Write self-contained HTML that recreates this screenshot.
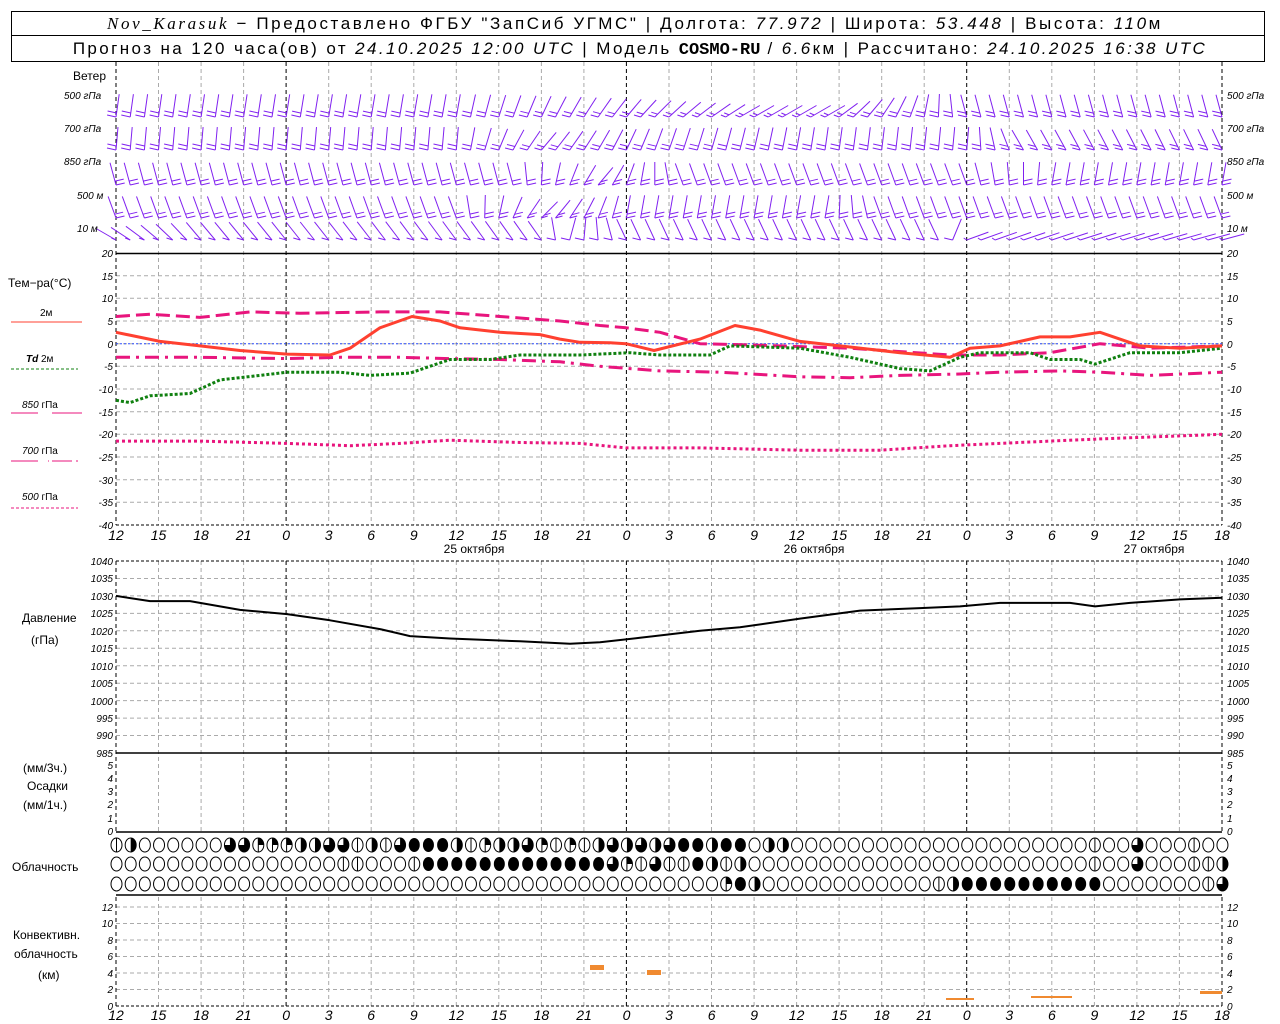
<!DOCTYPE html>
<html><head><meta charset="utf-8"><style>
html,body{margin:0;padding:0;background:#fff;}
svg{display:block;font-family:"Liberation Sans",sans-serif;}
.t{font-size:10px;font-style:italic;fill:#000;}
.l{font-size:12px;fill:#000;}
.h{font-size:17px;fill:#000;letter-spacing:2.6px;}
</style></head><body>
<svg id="s" width="1280" height="1024" viewBox="0 0 1280 1024" xmlns="http://www.w3.org/2000/svg">
<rect x="11.5" y="11.5" width="1253" height="50" fill="none" stroke="#000"/>
<line x1="11" y1="35.5" x2="1265" y2="35.5" stroke="#000"/>
<text class="h" x="635" y="29" text-anchor="middle"><tspan font-family="Liberation Serif" font-style="italic">Nov_Karasuk</tspan> − Предоставлено ФГБУ "ЗапСиб УГМС" | Долгота: <tspan font-style="italic">77.972</tspan> | Широта: <tspan font-style="italic">53.448</tspan> | Высота: <tspan font-style="italic">110</tspan>м</text>
<text class="h" x="640" y="54" text-anchor="middle" font-size="16" style="letter-spacing:2.4px">Прогноз на 120 часа(ов) от <tspan font-style="italic">24.10.2025 12:00 UTC</tspan>  | Модель <tspan font-family="Liberation Mono" font-weight="bold" style="letter-spacing:0">COSMO-RU</tspan> / <tspan font-style="italic">6.6</tspan>км | Рассчитано: <tspan font-style="italic">24.10.2025 16:38 UTC</tspan></text>
<g id="g"></g>
<g class="l">
<text x="73" y="80">Ветер</text>
<text x="8" y="287">Тем−ра(°C)</text>
<text x="40" y="316" font-size="10">2м</text>
<text x="26" y="362" font-size="10"><tspan font-style="italic" font-weight="bold">Td</tspan>  2м</text>
<text x="22" y="408" font-size="10"><tspan font-style="italic">850</tspan> гПа</text>
<text x="22" y="454" font-size="10"><tspan font-style="italic">700</tspan> гПа</text>
<text x="22" y="500" font-size="10"><tspan font-style="italic">500</tspan> гПа</text>
<text x="22" y="622">Давление</text>
<text x="31" y="644">(гПа)</text>
<text x="23" y="772">(мм/3ч.)</text>
<text x="27" y="790">Осадки</text>
<text x="23" y="809">(мм/1ч.)</text>
<text x="12" y="871">Облачность</text>
<text x="13" y="939">Конвективн.</text>
<text x="14" y="958">облачность</text>
<text x="38" y="979">(км)</text>
<text x="474" y="553" text-anchor="middle">25 октября</text>
<text x="814" y="553" text-anchor="middle">26 октября</text>
<text x="1154" y="553" text-anchor="middle">27 октября</text>
</g>
<g class="t">
<text x="64" y="99"><tspan>500</tspan> гПа</text><text x="64" y="132">700 гПа</text><text x="64" y="165">850 гПа</text><text x="77" y="199">500 м</text><text x="77" y="232">10  м</text>
<text x="1227" y="99">500 гПа</text><text x="1227" y="132">700 гПа</text><text x="1227" y="165">850 гПа</text><text x="1227" y="199">500 м</text><text x="1227" y="232">10  м</text>
</g>
<g class="t" text-anchor="end">
<text x="113" y="257">20</text><text x="113" y="280">15</text><text x="113" y="302">10</text><text x="113" y="325">5</text><text x="113" y="348">0</text><text x="113" y="370">-5</text><text x="113" y="393">-10</text><text x="113" y="416">-15</text><text x="113" y="438">-20</text><text x="113" y="461">-25</text><text x="113" y="484">-30</text><text x="113" y="506">-35</text><text x="113" y="529">-40</text>
<text x="113" y="565">1040</text><text x="113" y="582">1035</text><text x="113" y="600">1030</text><text x="113" y="617">1025</text><text x="113" y="635">1020</text><text x="113" y="652">1015</text><text x="113" y="670">1010</text><text x="113" y="687">1005</text><text x="113" y="705">1000</text><text x="113" y="722">995</text><text x="113" y="739">990</text><text x="113" y="757">985</text>
<text x="113" y="835">0</text><text x="113" y="822">1</text><text x="113" y="808">2</text><text x="113" y="795">3</text><text x="113" y="782">4</text><text x="113" y="769">5</text>
<text x="113" y="1010">0</text><text x="113" y="993">2</text><text x="113" y="977">4</text><text x="113" y="960">6</text><text x="113" y="944">8</text><text x="113" y="927">10</text><text x="113" y="911">12</text>
</g>
<g class="t">
<text x="1227" y="257">20</text><text x="1227" y="280">15</text><text x="1227" y="302">10</text><text x="1227" y="325">5</text><text x="1227" y="348">0</text><text x="1227" y="370">-5</text><text x="1227" y="393">-10</text><text x="1227" y="416">-15</text><text x="1227" y="438">-20</text><text x="1227" y="461">-25</text><text x="1227" y="484">-30</text><text x="1227" y="506">-35</text><text x="1227" y="529">-40</text>
<text x="1227" y="565">1040</text><text x="1227" y="582">1035</text><text x="1227" y="600">1030</text><text x="1227" y="617">1025</text><text x="1227" y="635">1020</text><text x="1227" y="652">1015</text><text x="1227" y="670">1010</text><text x="1227" y="687">1005</text><text x="1227" y="705">1000</text><text x="1227" y="722">995</text><text x="1227" y="739">990</text><text x="1227" y="757">985</text>
<text x="1227" y="835">0</text><text x="1227" y="822">1</text><text x="1227" y="808">2</text><text x="1227" y="795">3</text><text x="1227" y="782">4</text><text x="1227" y="769">5</text>
<text x="1227" y="1010">0</text><text x="1227" y="993">2</text><text x="1227" y="977">4</text><text x="1227" y="960">6</text><text x="1227" y="944">8</text><text x="1227" y="927">10</text><text x="1227" y="911">12</text>
</g>
<g font-size="14" font-style="italic" text-anchor="middle">
<text x="116" y="540">12</text><text x="158.5" y="540">15</text><text x="201" y="540">18</text><text x="243.6" y="540">21</text><text x="286.2" y="540">0</text><text x="328.7" y="540">3</text><text x="371.2" y="540">6</text><text x="413.8" y="540">9</text><text x="456.3" y="540">12</text><text x="498.9" y="540">15</text><text x="541.4" y="540">18</text><text x="584" y="540">21</text><text x="626.5" y="540">0</text><text x="669" y="540">3</text><text x="711.6" y="540">6</text><text x="754.1" y="540">9</text><text x="796.6" y="540">12</text><text x="839.2" y="540">15</text><text x="881.7" y="540">18</text><text x="924.3" y="540">21</text><text x="966.8" y="540">0</text><text x="1009.3" y="540">3</text><text x="1051.9" y="540">6</text><text x="1094.4" y="540">9</text><text x="1137" y="540">12</text><text x="1179.5" y="540">15</text><text x="1222" y="540">18</text>
<text x="116" y="1020">12</text><text x="158.5" y="1020">15</text><text x="201" y="1020">18</text><text x="243.6" y="1020">21</text><text x="286.2" y="1020">0</text><text x="328.7" y="1020">3</text><text x="371.2" y="1020">6</text><text x="413.8" y="1020">9</text><text x="456.3" y="1020">12</text><text x="498.9" y="1020">15</text><text x="541.4" y="1020">18</text><text x="584" y="1020">21</text><text x="626.5" y="1020">0</text><text x="669" y="1020">3</text><text x="711.6" y="1020">6</text><text x="754.1" y="1020">9</text><text x="796.6" y="1020">12</text><text x="839.2" y="1020">15</text><text x="881.7" y="1020">18</text><text x="924.3" y="1020">21</text><text x="966.8" y="1020">0</text><text x="1009.3" y="1020">3</text><text x="1051.9" y="1020">6</text><text x="1094.4" y="1020">9</text><text x="1137" y="1020">12</text><text x="1179.5" y="1020">15</text><text x="1222" y="1020">18</text>
</g>
</svg>
<script>
(function(){
var g=document.getElementById("g"),out=[];
function X(t){return 116+t*14.179;}
function L(x1,y1,x2,y2,c,w,d){out.push('<line x1="'+x1.toFixed(1)+'" y1="'+y1.toFixed(1)+'" x2="'+x2.toFixed(1)+'" y2="'+y2.toFixed(1)+'" stroke="'+c+'" stroke-width="'+(w||1)+'"'+(d?' stroke-dasharray="'+d+'"':'')+'/>');}
function TY(T){return 253+(20-T)*4.5333;}
function PY(P){return 561+(1040-P)*3.4909;}
function CY(k){return 1006-k*8.25;}
for(var T=15;T>-40;T-=5)L(116,TY(T),1222,TY(T),"#aaa",1,"4,3");
for(var P=1035;P>985;P-=5)L(116,PY(P),1222,PY(P),"#aaa",1,"4,3");
for(var k=2;k<=12;k+=2)L(116,CY(k),1222,CY(k),"#aaa",1,"4,3");
for(var k=0;k<=26;k++){var x=X(3*k),day=(k%8==4),c=day?"#000":"#aaa";
 if(k==0||k==26)c="#000";
 L(x,62,x,525,c,1,"4,3");L(x,561,x,832,c,1,"4,3");L(x,897,x,1006,c,1,"4,3");}
L(116,253.5,1222,253.5,"#000",1.5);L(116,753,1222,753,"#000",1.5);L(116,832,1222,832,"#000",1.5);L(116,895,1222,895,"#000",1.5);
L(116,525,1222,525,"#000",1,"3,2");L(116,561,1222,561,"#000",1,"3,2");L(116,1006,1222,1006,"#000",1,"3,2");
L(116,343.7,1222,343.7,"#3050ff",1,"2,2");
L(11,322,82,322,"#ff4030",1);L(11,369,78,369,"#108010",1,"3,2");
L(11,413,38,413,"#e8157d",1);L(52,413,82,413,"#e8157d",1);
L(11,461,38,461,"#e8157d",1);L(48,461,49,461,"#e8157d",1);L(52,461,72,461,"#e8157d",1);L(76,461,78,461,"#e8157d",1);
L(11,508,78,508,"#e8157d",1,"3,2");
function pl(pts,f,c,w,d){var s=pts.map(function(p){return p[0]+","+f(p[1]).toFixed(1);}).join(" ");
 out.push('<polyline points="'+s+'" fill="none" stroke="'+c+'" stroke-width="'+w+'"'+(d?' stroke-dasharray="'+d+'"':'')+' stroke-linejoin="round"/>');}
pl([[116,-21.5],[200,-21.5],[287,-22],[350,-22.5],[400,-22],[450,-21.3],[520,-21.8],[580,-22],[626,-23],[700,-23],[800,-23.5],[880,-23.5],[950,-22.5],[1050,-21.5],[1100,-21],[1222,-20]],TY,"#e8157d",3,"3,3");
pl([[116,-3],[200,-3],[287,-3.3],[340,-3],[400,-3],[450,-3.3],[500,-3.5],[560,-4],[600,-5],[630,-5.5],[660,-6],[720,-6.3],[800,-7.3],[850,-7.5],[900,-7],[960,-6.7],[1000,-6.3],[1060,-6],[1100,-6.3],[1150,-7],[1222,-6.3]],TY,"#e8157d",3,"14,6,3,6");
pl([[116,6],[150,6.5],[200,5.8],[250,7],[300,6.7],[380,7],[440,7],[500,6],[560,5],[600,4],[626,3.5],[660,2.5],[700,0],[750,-0.3],[850,-1],[950,-2.5],[1000,-2.5],[1050,-2],[1100,0],[1150,-1],[1222,-0.5]],TY,"#e8157d",3,"14,6");
pl([[116,-12.5],[130,-13],[150,-11.5],[190,-11],[220,-8],[260,-7],[287,-6.3],[340,-6.3],[370,-7],[410,-6.5],[450,-3.5],[490,-3.5],[520,-2.5],[580,-2.5],[630,-2],[660,-2.5],[710,-2.5],[730,-0.5],[800,-1],[850,-3],[900,-5.5],[930,-6],[960,-3],[980,-2],[1030,-2],[1050,-3.5],[1080,-3.5],[1095,-4.5],[1130,-2],[1180,-2],[1222,-1]],TY,"#108010",3,"3,2");
pl([[116,2.5],[160,0.5],[200,-0.5],[240,-1.5],[287,-2.3],[330,-2.5],[350,-1],[380,3.5],[412,6],[440,5],[460,3.5],[500,2.5],[540,2],[560,1],[580,0.3],[610,0.2],[626,0],[654,-1.5],[700,1],[735,4],[760,3],[800,0.5],[840,-0.5],[900,-2],[950,-3],[970,-1],[1000,-0.5],[1040,1.5],[1070,1.5],[1100,2.5],[1140,-0.5],[1180,-1],[1222,-0.5]],TY,"#ff4030",3);
pl([[116,1030],[150,1028.5],[190,1028.5],[240,1026],[287,1024.8],[330,1023],[380,1020.5],[410,1018.5],[450,1017.8],[520,1017],[570,1016.3],[600,1016.7],[640,1018],[700,1020],[740,1021],[800,1023.5],[860,1025.8],[920,1026.5],[960,1027],[1000,1028],[1070,1028],[1095,1027],[1130,1028],[1180,1029],[1222,1029.5]],PY,"#000",2);
[[590,965,14,5],[647,970,14,5],[946,998,28,2],[1031,996,41,2],[1200,991,22,3]].forEach(function(r){out.push('<rect x="'+r[0]+'" y="'+r[1]+'" width="'+r[2]+'" height="'+r[3]+'" fill="#f08a30"/>');});
function seg(kp,t){for(var i=0;i<kp.length-1;i++){if(t>=kp[i][0]&&t<=kp[i+1][0]){var f=(t-kp[i][0])/(kp[i+1][0]-kp[i][0]);return kp[i][1]+f*(kp[i+1][1]-kp[i][1]);}}return kp[kp.length-1][1];}
var rows=[
 [117,[[0,8],[24,10],[34,35],[44,60],[50,60],[56,20],[60,-15],[78,-15]]],
 [150,[[0,5],[24,5],[30,40],[38,20],[50,8],[60,5],[64,-30],[78,-25]]],
 [185,[[0,-15],[28,-15],[34,40],[40,-20],[60,-20],[66,10],[78,10]]],
 [218,[[0,-20],[24,-20],[30,45],[36,10],[50,10],[54,-20],[78,-20]]],
 [240,[[0,-60],[6,-40],[30,-35],[32,15],[36,-25],[58,-25],[60,70],[78,75]]]];
rows.forEach(function(r,ri){
 for(var t=0;t<=78;t++){
  var a=seg(r[1],t)*Math.PI/180,len=23,x=X(t),y=r[0];
  var sx=Math.sin(a),cy=Math.cos(a);
  L(x,y,x+len*sx,y-len*cy,"#8020f0",1);
  var n=(ri==4)?1:2;
  for(var j=0;j<n;j++){var bx=x+j*4*sx,by=y-j*4*cy;L(bx,by,bx-9*cy*(ri==2||ri==3?-1:1),by-2,"#8020f0",1);}
 }});
var cl=["l2000000331112233l2l34442l12231l1l23232344244022000000000000000000000l003000l0",
        "0000000000000000ll000l444444444444431l3ll42l2000000000000000000000000l003000ll23",
        "0000000000000000000000000000000000000000000142000000000000l244444444440000000l3444"];
var ys=[845,864,884];
cl.forEach(function(s,ri){for(var i=0;i<=78;i++){var c=s.charAt(i)||"0",cx=X(i)+0.5,cy=ys[ri];
 var rx=5.5,ry=7;
 if(c=="4")out.push('<ellipse cx="'+cx+'" cy="'+cy+'" rx="'+rx+'" ry="'+ry+'" fill="#000"/>');
 else{
  if(c=="2"||c=="3"||c=="1"){var d;
   if(c=="2")d='M'+cx+' '+(cy-ry)+' A'+rx+' '+ry+' 0 0 1 '+cx+' '+(cy+ry)+' Z';
   else if(c=="1")d='M'+cx+' '+cy+' L'+cx+' '+(cy-ry)+' A'+rx+' '+ry+' 0 0 1 '+(cx+rx)+' '+cy+' Z';
   else d='M'+cx+' '+cy+' L'+(cx-rx)+' '+cy+' A'+rx+' '+ry+' 0 1 0 '+cx+' '+(cy-ry)+' Z';
   out.push('<path d="'+d+'" fill="#000"/>');}
  if(c=="l"||c=="1")L(cx,cy-ry,cx,cy+ry,"#000",1);
  out.push('<ellipse cx="'+cx+'" cy="'+cy+'" rx="'+rx+'" ry="'+ry+'" fill="none" stroke="#000" stroke-width="1"/>');}
}});
g.innerHTML=out.join("");
})();
</script>
</body></html>
